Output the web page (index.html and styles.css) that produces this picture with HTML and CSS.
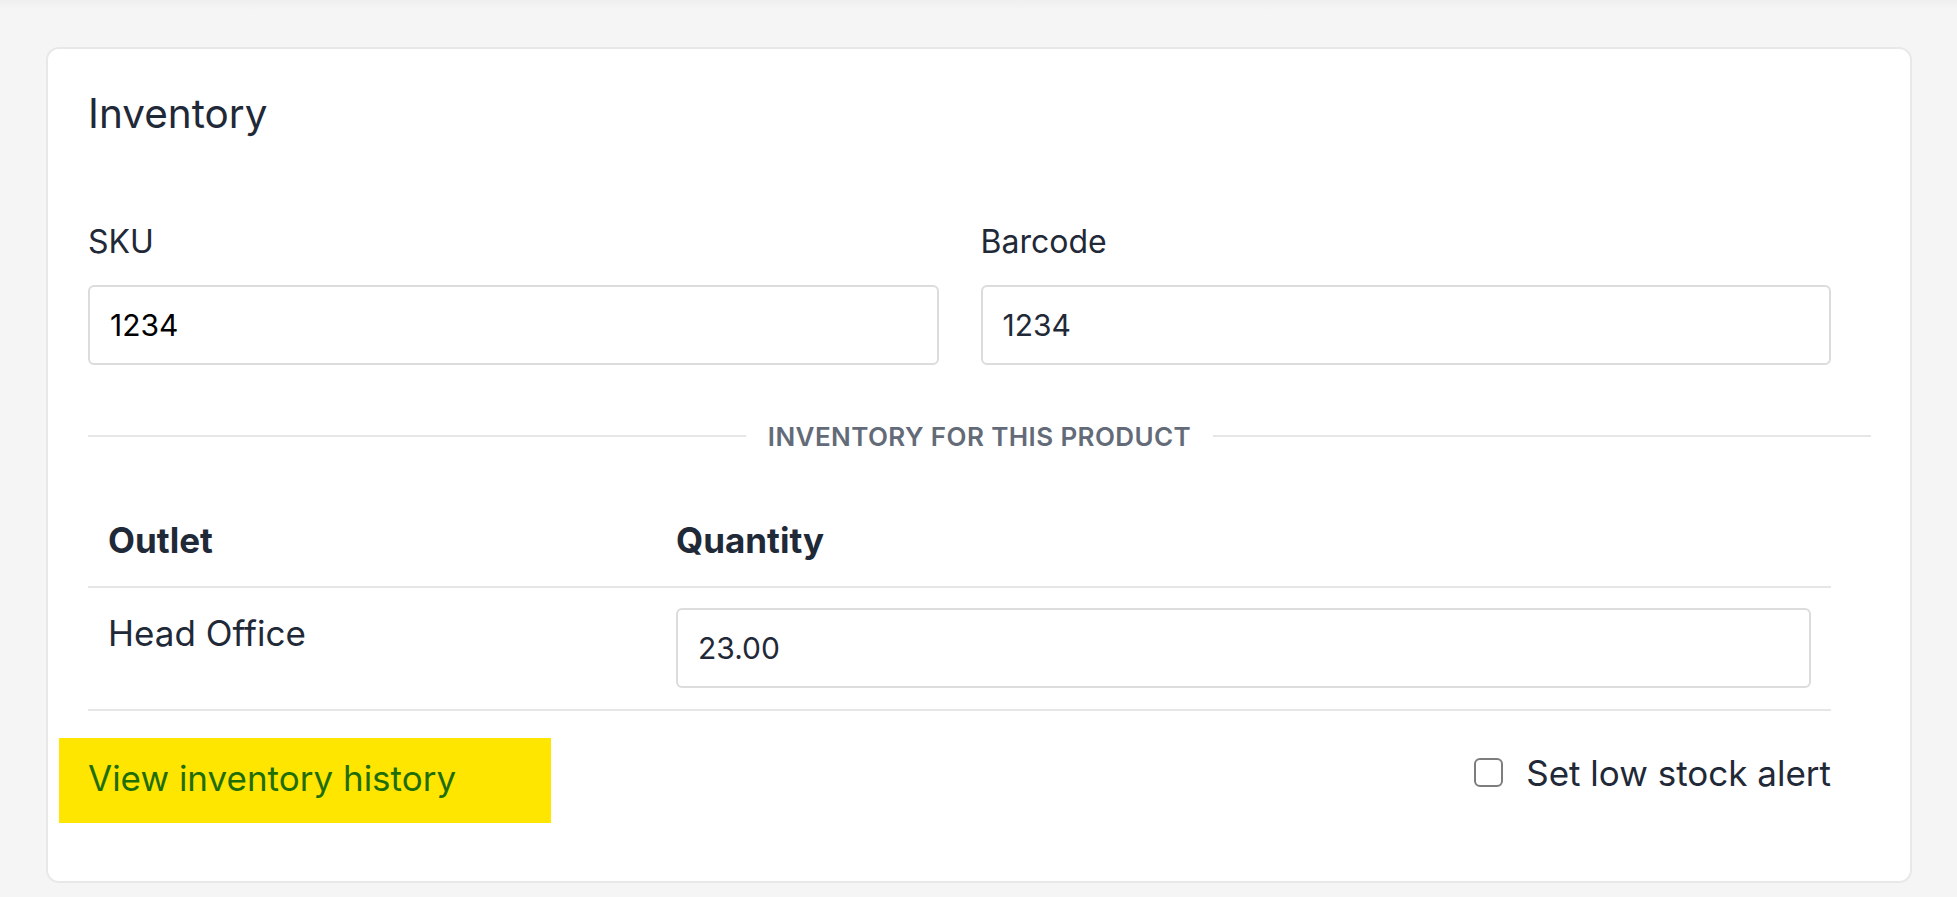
FILE: index.html
```html
<!DOCTYPE html>
<html lang="en">
<head>
<meta charset="utf-8">
<title>Inventory</title>
<link rel="stylesheet" href="styles.css">
</head>
<body>
<div class="top-shade"></div>
<div class="page">
  <section class="card">
    <h2 class="card-title">Inventory</h2>
    <div class="fields">
      <div class="field">
        <label class="field-label" for="sku">SKU</label>
        <input class="text-input text-input--black" id="sku" type="text" value="1234">
      </div>
      <div class="field">
        <label class="field-label" for="barcode">Barcode</label>
        <input class="text-input" id="barcode" type="text" value="1234">
      </div>
    </div>
    <div class="divider">
      <span class="divider-line"></span>
      <span class="divider-text">INVENTORY FOR THIS PRODUCT</span>
      <span class="divider-line"></span>
    </div>
    <table class="stock-table">
      <thead>
        <tr>
          <th class="col-outlet">Outlet</th>
          <th>Quantity</th>
        </tr>
      </thead>
      <tbody>
        <tr>
          <td class="col-outlet">Head Office</td>
          <td><input class="text-input" type="text" value="23.00"></td>
        </tr>
      </tbody>
    </table>
    <div class="footer">
      <a class="history-link" href="#">View inventory history</a>
      <label class="alert-option">
        <input class="checkbox" type="checkbox">
        <span>Set low stock alert</span>
      </label>
    </div>
  </section>
</div>
</body>
</html>
```
FILE: styles.css
```css
* { box-sizing: border-box; }

html, body {
  margin: 0;
  padding: 0;
}

body {
  background: #f5f5f5;
  font-family: Inter, "Noto Sans", sans-serif;
  color: #1f2937;
}

.top-shade {
  height: 10px;
  background: linear-gradient(#efefef, #f5f5f5);
}

.page {
  padding: 37px 45px 15px 46px;
}

.card {
  width: 1866px;
  background: #ffffff;
  border: 2px solid #e8e8e8;
  border-radius: 13px;
  padding: 41px 39px 40px 40px;
}

.card-title {
  margin: 0 0 80px 0;
  font-size: 40.5px;
  line-height: 48px;
  font-weight: 400;
  color: #1f2937;
}

.fields {
  display: grid;
  grid-template-columns: 1fr 1fr;
  column-gap: 42px;
  padding-right: 40px;
}

.field-label {
  display: block;
  font-size: 32px;
  line-height: 48px;
  margin-bottom: 19px;
  color: #1f2937;
}

.text-input {
  display: block;
  width: 100%;
  height: 80px;
  border: 2px solid #dcdcdc;
  border-radius: 6px;
  padding: 0 20px;
  font-family: Inter, "Noto Sans", sans-serif;
  font-size: 30px;
  color: #1f2937;
  background: #fff;
  outline: none;
}

.text-input--black { color: #000; }

.divider {
  display: flex;
  align-items: center;
  margin-top: 51.5px;
}

.divider-line {
  flex: 1;
  height: 2px;
  background: #e6e6e6;
}

.divider-text {
  padding: 0 22px;
  font-size: 26px;
  line-height: 39px;
  font-weight: 600;
  letter-spacing: 0.4px;
  color: #646b78;
}

.stock-table {
  margin-top: 39px;
  width: calc(100% - 40px);
  border-collapse: collapse;
}

.stock-table th {
  text-align: left;
  padding: 20px;
  font-size: 35px;
  line-height: 51px;
  font-weight: 700;
  color: #1f2937;
  border-bottom: 2px solid #e6e6e6;
}

.stock-table td {
  padding: 20px 20px 21px;
  font-size: 35px;
  line-height: 51px;
  vertical-align: top;
  border-bottom: 2px solid #e6e6e6;
}

.col-outlet { width: 568px; }

.footer {
  display: flex;
  justify-content: space-between;
  align-items: flex-start;
  margin-top: 27px;
  padding-right: 40px;
  padding-bottom: 18px;
}

.history-link {
  display: block;
  width: 492px;
  margin-left: -29px;
  padding: 15px 0 19px 29px;
  background: #ffe600;
  color: #1f6e05;
  font-size: 35px;
  line-height: 51px;
  text-decoration: none;
}

.alert-option {
  display: flex;
  align-items: center;
  gap: 23px;
  margin-top: 11px;
  font-size: 35px;
  line-height: 48px;
  color: #1f2937;
}

.checkbox {
  appearance: none;
  -webkit-appearance: none;
  margin: 0;
  width: 29px;
  height: 29px;
  border: 2px solid #7d7d7d;
  border-radius: 6px;
  background: #fff;
}
```
